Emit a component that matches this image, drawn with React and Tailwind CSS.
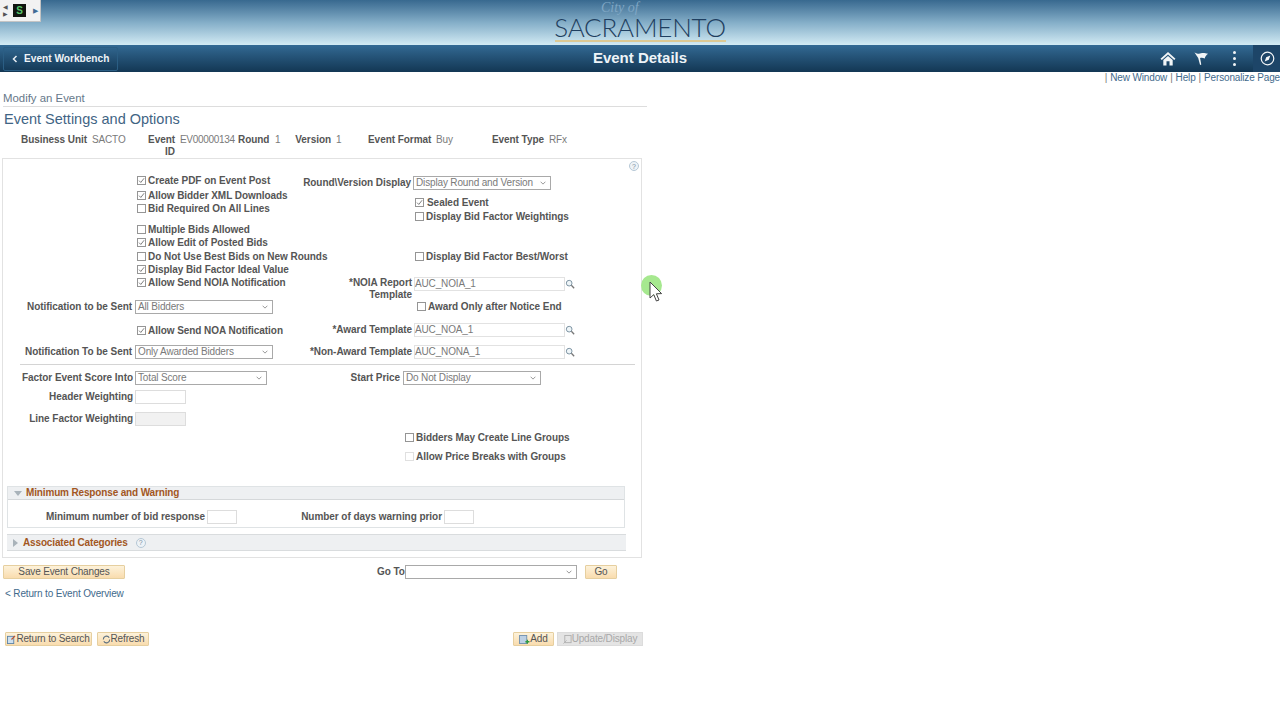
const Tick = () => (
  <svg viewBox="0 0 10 10" className="w-[7px] h-[7px]" fill="none" stroke="#5a5a5a" strokeWidth="1.1">
    <path d="M1.5 5.2 L4 7.8 L8.7 1.8" />
  </svg>
);

function Box({ on, dim }) {
  return (
    <span className={`w-[9px] h-[9px] shrink-0 flex items-center justify-center border bg-white ${dim ? "border-[#e0e0e0]" : "border-[#959595]"}`}>
      {on ? <Tick /> : null}
    </span>
  );
}

function Chk({ on, dim, label, className = "" }) {
  return (
    <div className={`flex items-center h-[13px] whitespace-nowrap font-bold text-[10px] tracking-[-0.05px] leading-[13px] text-[#555555] ${className}`}>
      <Box on={on} dim={dim} />
      <span className="ml-[2px]">{label}</span>
    </div>
  );
}

function Sel({ value, className = "" }) {
  return (
    <div className={`h-[14px] flex items-center justify-between border border-[#a9a9a9] bg-white pl-[2px] pr-[4px] text-[10px] tracking-[-0.15px] leading-[12px] text-[#7a7a7a] whitespace-nowrap ${className}`}>
      <span>{value}</span>
      <svg viewBox="0 0 8 5" className="w-[6px] h-[4px]" fill="none" stroke="#777777" strokeWidth="1">
        <path d="M0.8 0.8 L4 4 L7.2 0.8" />
      </svg>
    </div>
  );
}

const Lens = () => (
  <svg viewBox="0 0 12 12" className="w-[10px] h-[10px]" fill="none">
    <circle cx="5" cy="5" r="3.4" stroke="#7f95a4" strokeWidth="1.2" fill="#eef5f8" />
    <path d="M7.6 7.6 L11 11" stroke="#777777" strokeWidth="1.6" />
  </svg>
);

function Lookup({ value }) {
  return (
    <div className="flex items-center">
      <div className="w-[151px] h-[14px] border border-[#e2e2e2] bg-white flex items-center text-[10px] tracking-[-0.15px] leading-[12px] text-[#7a7a7a]">{value}</div>
      <Lens />
    </div>
  );
}

const Help = ({ className = "" }) => (
  <span className={`w-[10px] h-[10px] rounded-full border border-[#b6c8d6] bg-[#eef3f7] flex items-center justify-center text-[7px] leading-none text-[#7b8fa0] ${className}`}>?</span>
);

const Label = ({ children, className = "" }) => (
  <span className={`font-bold text-[10px] tracking-[-0.05px] leading-[12px] text-[#555555] text-right whitespace-nowrap ${className}`}>{children}</span>
);

function TopBtn({ children, className = "" }) {
  return (
    <div className={`h-[14px] flex items-center justify-center rounded-[1px] border border-[#e6cf9f] bg-gradient-to-b from-[#fdf2da] to-[#f9dcae] text-[10px] tracking-[-0.15px] leading-[12px] text-[#555555] whitespace-nowrap ${className}`}>
      {children}
    </div>
  );
}

function Header() {
  return (
    <>
      <div className="relative h-[45px] bg-gradient-to-b from-[#38698f] via-[#84aec8] to-[#d3ebf4] flex justify-center">
        <div className="absolute left-0 top-0 w-[41px] h-[22px] bg-[#f2f2f2] border-r border-b border-[#c4c4c4] flex items-center">
          <div className="w-[10px] flex flex-col items-center text-[6px] leading-[7px] text-[#555555]">
            <span>◀</span>
            <span>▶</span>
          </div>
          <div className="w-[13px] h-[13px] ml-[3px] bg-[#101510] flex items-center justify-center text-[10px] leading-[12px] font-bold text-[#56c46a]">S</div>
          <span className="ml-[7px] text-[7px] leading-[10px] text-[#3f6c96]">▶</span>
        </div>
        <div className="w-[172px] flex flex-col items-center relative">
          <span className="absolute top-[1px] left-[47px] text-[14px] leading-[14px] italic text-[#7fa6c4] font-['Liberation_Serif',serif]">City of</span>
          <span className="mt-[15px] text-[26px] leading-[24px] font-light tracking-[-0.2px] text-[#1f3f60] font-['Lato',sans-serif]">SACRAMENTO</span>
          <div className="w-[171px] h-[2px] mt-[1px] bg-[#dcc994]" />
        </div>
      </div>
      <div className="h-[27px] bg-gradient-to-b from-[#336a94] to-[#133754] flex items-center relative">
        <div className="ml-[3px] w-[115px] h-[24px] border border-[#2b5e84] rounded-[2px] flex items-center pl-[8px]">
          <svg viewBox="0 0 8 10" className="w-[6px] h-[8px]" fill="none" stroke="#e8eef3" strokeWidth="2">
            <path d="M6 1 L2 5 L6 9" />
          </svg>
          <span className="ml-[6px] text-[10.15px] leading-[12px] font-bold text-[#eef3f7] whitespace-nowrap">Event Workbench</span>
        </div>
        <span className="absolute left-0 right-0 top-[4px] text-center text-[15px] leading-[18px] font-bold text-[#eef4f8]">Event Details</span>
        <div className="ml-auto flex items-center h-full relative">
          <svg viewBox="0 0 16 16" className="w-[16px] h-[15px]" fill="#f2f5f7">
            <path d="M8 1 L16 8.2 L14.6 9.6 L8 3.8 L1.4 9.6 L0 8.2 Z" />
            <path d="M3 9.6 L8 5.2 L13 9.6 V15.5 H9.6 V11 H6.4 V15.5 H3 Z" />
          </svg>
          <svg viewBox="0 0 16 16" className="w-[16px] h-[15px] ml-[17px]" fill="#f2f5f7">
            <path d="M1 1.5 C4 3 6 3.2 8 2.5 C10 1.8 12 2 15.5 3 C13.5 4.5 12.5 6 12 8 C10 7 8.5 7 7 7.5 L8.3 14.5 L7 15 L5 7.5 C3.5 5 2.5 3.5 1 1.5 Z" />
          </svg>
          <div className="flex flex-col gap-[3px] ml-[24px]">
            <span className="w-[3px] h-[3px] bg-[#f2f5f7] rounded-full" />
            <span className="w-[3px] h-[3px] bg-[#f2f5f7] rounded-full" />
            <span className="w-[3px] h-[3px] bg-[#f2f5f7] rounded-full" />
          </div>
          <div className="ml-[17px] w-[27px] h-full bg-[#1d4568] flex items-center justify-center pl-[1px]">
            <svg viewBox="0 0 16 16" className="w-[15px] h-[15px]" fill="none">
              <circle cx="8" cy="8" r="6.7" stroke="#f2f5f7" strokeWidth="1.3" />
              <path d="M11 4.8 L9.4 9.4 L5 11.2 L6.6 6.6 Z" fill="#f2f5f7" />
            </svg>
          </div>
        </div>
      </div>
    </>
  );
}

function LeftCol() {
  return (
    <div className="w-[300px] shrink-0 flex flex-col">
      <Chk on label="Create PDF on Event Post" className="mt-[15px] ml-[134px]" />
      <Chk on label="Allow Bidder XML Downloads" className="mt-[2px] ml-[134px]" />
      <Chk label="Bid Required On All Lines" className="ml-[134px]" />
      <Chk label="Multiple Bids Allowed" className="mt-[8px] ml-[134px]" />
      <Chk on label="Allow Edit of Posted Bids" className="ml-[134px]" />
      <Chk label="Do Not Use Best Bids on New Rounds" className="mt-[1px] ml-[134px]" />
      <Chk on label="Display Bid Factor Ideal Value" className="ml-[134px]" />
      <Chk on label="Allow Send NOIA Notification" className="ml-[134px]" />
      <div className="flex items-center mt-[11px]">
        <Label className="w-[129px]">Notification to be Sent</Label>
        <Sel value="All Bidders" className="w-[138px] ml-[3px]" />
      </div>
      <Chk on label="Allow Send NOA Notification" className="mt-[10px] ml-[134px]" />
      <div className="flex items-center mt-[8px]">
        <Label className="w-[129px]">Notification To be Sent</Label>
        <Sel value="Only Awarded Bidders" className="w-[138px] ml-[3px]" />
      </div>
    </div>
  );
}

function RightCol() {
  return (
    <div className="flex flex-col">
      <div className="flex items-center mt-[17px]">
        <Label className="w-[108px]">Round\Version Display</Label>
        <Sel value="Display Round and Version" className="w-[138px] ml-[2px]" />
      </div>
      <Chk on label={<span className="ml-[1px]">Sealed Event</span>} className="mt-[6px] ml-[112px]" />
      <Chk label="Display Bid Factor Weightings" className="mt-[1px] ml-[112px]" />
      <Chk label="Display Bid Factor Best/Worst" className="mt-[27px] ml-[112px]" />
      <div className="flex items-start mt-[14px] h-[23px]">
        <Label className="w-[109px] leading-[11px]">*NOIA Report<br />Template</Label>
        <div className="ml-[2px]">
          <Lookup value="AUC_NOIA_1" />
        </div>
      </div>
      <Chk label="Award Only after Notice End" className="ml-[114px]" />
      <div className="flex items-center mt-[10px]">
        <Label className="w-[109px]">*Award Template</Label>
        <div className="ml-[2px]">
          <Lookup value="AUC_NOA_1" />
        </div>
      </div>
      <div className="flex items-center mt-[8px]">
        <Label className="w-[109px]">*Non-Award Template</Label>
        <div className="ml-[2px]">
          <Lookup value="AUC_NONA_1" />
        </div>
      </div>
    </div>
  );
}

function Panel() {
  return (
    <div className="relative w-[640px] h-[400px] ml-[2px] border border-[#e2e2e2] flex flex-col">
      <Help className="absolute right-[2px] top-[2px]" />
      <div className="flex">
        <LeftCol />
        <RightCol />
      </div>
      <div className="h-[1px] bg-[#d4d4d4] mt-[5px] ml-[17px] w-[615px]" />
      <div className="flex items-center mt-[6px]">
        <Label className="w-[130px]">Factor Event Score Into</Label>
        <Sel value="Total Score" className="w-[132px] ml-[2px]" />
        <Label className="w-[133px]">Start Price</Label>
        <Sel value="Do Not Display" className="w-[138px] ml-[3px]" />
      </div>
      <div className="flex items-center mt-[5px]">
        <Label className="w-[130px]">Header Weighting</Label>
        <div className="w-[51px] h-[14px] ml-[2px] border border-[#dddddd] bg-white" />
      </div>
      <div className="flex items-center mt-[8px]">
        <Label className="w-[130px]">Line Factor Weighting</Label>
        <div className="w-[51px] h-[14px] ml-[2px] border border-[#dddddd] bg-[#f1f1f1]" />
      </div>
      <Chk label="Bidders May Create Line Groups" className="mt-[5px] ml-[402px]" />
      <Chk dim label="Allow Price Breaks with Groups" className="mt-[6px] ml-[402px]" />
      <div className="mt-[23px] ml-[4px] w-[618px] h-[42px] border border-[#dfe3e5]">
        <div className="h-[13px] bg-[#eef0f2] border-b border-[#d5d8da] flex items-center pl-[6px]">
          <span className="w-0 h-0 border-l-[4px] border-r-[4px] border-t-[5px] border-l-transparent border-r-transparent border-t-[#a9b3ba]" />
          <span className="ml-[4px] font-bold text-[10px] tracking-[-0.15px] leading-[12px] text-[#a2571f]">Minimum Response and Warning</span>
        </div>
        <div className="flex items-center mt-[10px]">
          <Label className="w-[197px]">Minimum number of bid response</Label>
          <div className="w-[30px] h-[14px] ml-[2px] border border-[#dddddd] bg-white" />
          <Label className="w-[205px]">Number of days warning prior</Label>
          <div className="w-[30px] h-[14px] ml-[2px] border border-[#dddddd] bg-white" />
        </div>
      </div>
      <div className="mt-[6px] ml-[4px] w-[619px] h-[17px] bg-[#eef0f2] border-b border-t border-[#d9dcde] flex items-center pl-[6px]">
        <span className="w-0 h-0 border-t-[4px] border-b-[4px] border-l-[5px] border-t-transparent border-b-transparent border-l-[#a9b3ba]" />
        <span className="ml-[5px] font-bold text-[10px] tracking-[-0.15px] leading-[12px] text-[#a2571f] ">Associated Categories</span>
        <Help className="ml-[8px]" />
      </div>
    </div>
  );
}

export default function App() {
  return (
    <div className="relative w-[1280px] h-[720px] overflow-hidden bg-white font-['Liberation_Sans',Arial,sans-serif]">
      <Header />
      <div className="h-[12px] flex justify-end items-center text-[10px] tracking-[-0.15px] leading-[12px] text-[#3f6a8c] whitespace-nowrap">
        <span className="text-[#7a7a7a]">|</span>
        <span className="ml-[3px]">New Window</span>
        <span className="ml-[3px] text-[#7a7a7a]">|</span>
        <span className="ml-[3px]">Help</span>
        <span className="ml-[3px] text-[#7a7a7a]">|</span>
        <span className="ml-[3px]">Personalize Page</span>
      </div>
      <div className="ml-[3px] w-[644px] mt-[6px] h-[17px] border-b border-[#dddddd] flex items-center text-[11.4px] leading-[14px] text-[#66788a]">Modify an Event</div>
      <div className="ml-[4px] mt-[3px] h-[18px] flex items-center text-[14.5px] leading-[18px] text-[#3f6484] whitespace-nowrap">Event Settings and Options</div>
      <div className="flex mt-[6px] h-[24px] text-[10px] tracking-[-0.15px] leading-[12px] whitespace-nowrap">
        <Label className="ml-[21px] w-[66px]">Business Unit</Label>
        <span className="ml-[5px] w-[34px] text-[#7a7a7a]">SACTO</span>
        <Label className="ml-[20px] w-[29px]">Event<br />ID</Label>
        <span className="ml-[5px] w-[55px] text-[#7a7a7a] tracking-[-0.3px]">EV00000134</span>
        <Label className="ml-[3px] w-[31px]">Round</Label>
        <span className="ml-[6px] w-[5px] text-[#7a7a7a]">1</span>
        <Label className="ml-[15px] w-[36px]">Version</Label>
        <span className="ml-[5px] w-[5px] text-[#7a7a7a]">1</span>
        <Label className="ml-[27px] w-[63px]">Event Format</Label>
        <span className="ml-[5px] w-[18px] text-[#7a7a7a]">Buy</span>
        <Label className="ml-[36px] w-[54px]">Event Type</Label>
        <span className="ml-[5px] text-[#7a7a7a]">RFx</span>
      </div>
      <Panel />
      <div className="flex items-center mt-[6px] h-[15px]">
        <TopBtn className="ml-[3px] w-[122px]">Save Event Changes</TopBtn>
        <Label className="ml-[252px] w-[27px]">Go To</Label>
        <Sel value="" className="ml-[1px] w-[172px] border-[#9a9a9a]" />
        <TopBtn className="ml-[8px] w-[32px]">Go</TopBtn>
      </div>
      <div className="ml-[5px] mt-[8px] h-[14px] flex items-center text-[10px] tracking-[-0.15px] leading-[12px] text-[#3f6a8c]">&lt; Return to Event Overview</div>
      <div className="flex items-center mt-[31px] h-[14px]">
        <TopBtn className="ml-[5px] w-[87px]">
          <svg viewBox="0 0 10 10" className="w-[9px] h-[9px]" fill="none"><rect x="0.5" y="1.5" width="7" height="8" fill="#cfe0ee" stroke="#5d84a8" /><path d="M5 5 L9 1" stroke="#c0542a" strokeWidth="1.3" /></svg>
          <span>Return to Search</span>
        </TopBtn>
        <TopBtn className="ml-[5px] w-[52px]">
          <svg viewBox="0 0 10 10" className="w-[9px] h-[9px]" fill="none" stroke="#5a6f80" strokeWidth="1.2"><path d="M1.5 5 A3.5 3.5 0 0 1 8 3" /><path d="M8.5 5 A3.5 3.5 0 0 1 2 7" /></svg>
          <span>Refresh</span>
        </TopBtn>
        <TopBtn className="ml-[364px] w-[41px]">
          <svg viewBox="0 0 12 10" className="w-[11px] h-[9px]" fill="none"><rect x="0.5" y="0.5" width="8" height="9" fill="#bcd0e4" stroke="#6f8fae" /><path d="M7 7.5 H11.5 M9.2 5.2 V9.8" stroke="#2f9a3f" strokeWidth="1.4" /></svg>
          <span>Add</span>
        </TopBtn>
        <div className="ml-[3px] w-[86px] h-[14px] flex items-center justify-center border border-[#dcdcdc] bg-[#e4e4e4] text-[10px] tracking-[-0.15px] leading-[12px] text-[#a8a8a8] whitespace-nowrap">
          <svg viewBox="0 0 10 10" className="w-[9px] h-[9px]" fill="none" stroke="#b0b0b0"><rect x="2" y="0.5" width="7" height="8" /><path d="M0.5 9.5 L4 6" /></svg>
          <span>Update/Display</span>
        </div>
      </div>
      <span className="absolute left-[641px] top-[275px] w-[21px] h-[21px] rounded-full bg-[#a6e88f]" />
      <svg viewBox="0 0 14 22" className="absolute left-[649px] top-[281px] w-[14px] h-[22px]">
        <path d="M1 1 V17 L4.8 13.6 L7.4 20 L10 19 L7.4 12.8 L12.6 12.6 Z" fill="#ffffff" stroke="#444444" strokeWidth="1" />
      </svg>
    </div>
  );
}
